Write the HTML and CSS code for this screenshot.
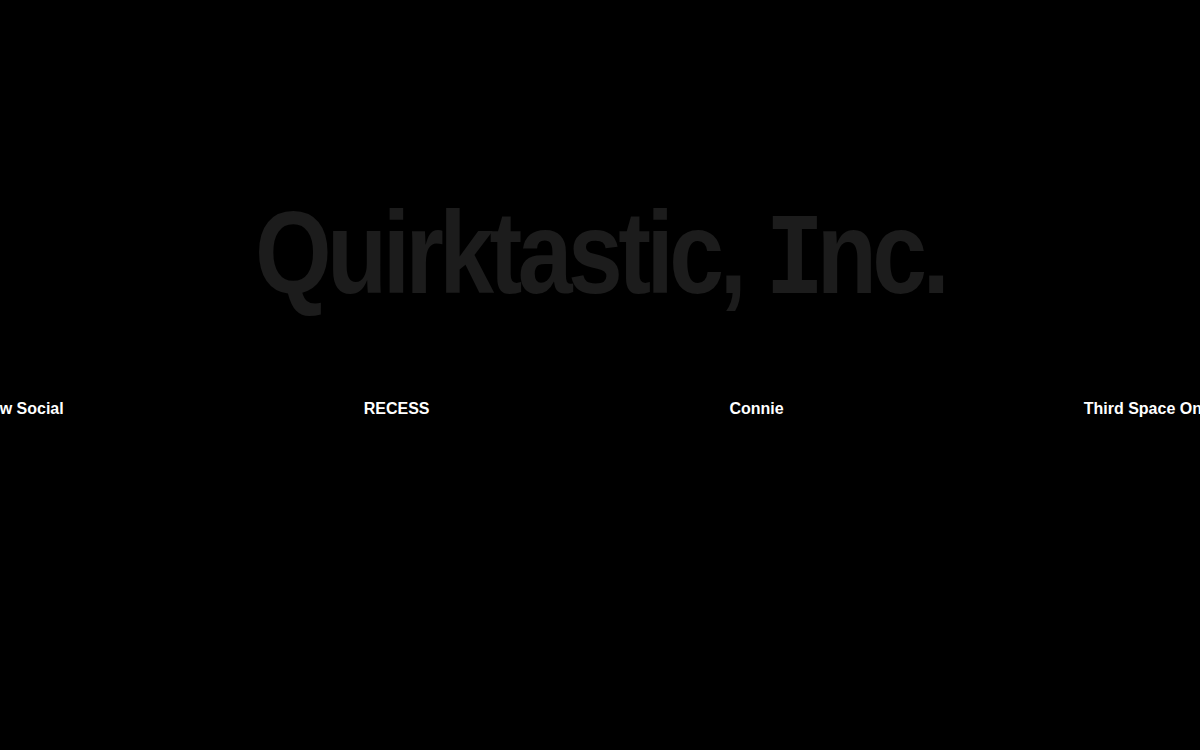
FILE: index.html
```html
<!DOCTYPE html>
<html lang="en">
<head>
<meta charset="utf-8">
<title>Quirktastic, Inc.</title>
<link rel="stylesheet" href="styles.css">
</head>
<body>
<main class="page">
  <section class="hero">
    <h1 class="brand">Quirktastic, <span class="brand-i">I</span>nc.</h1>
  </section>
  <section class="ticker">
    <ul class="ticker-track">
      <li class="ticker-item">Glow Social</li>
      <li class="ticker-item">RECESS</li>
      <li class="ticker-item">Connie</li>
      <li class="ticker-item">Third Space Online</li>
    </ul>
  </section>
</main>
</body>
</html>
```
FILE: styles.css
```css
* { box-sizing: border-box; }
html, body {
  margin: 0;
  padding: 0;
  background: #000;
  width: 100%;
  height: 100%;
  overflow: hidden;
}
.page {
  display: flex;
  flex-direction: column;
  height: 750px;
}
.hero {
  padding-top: 183px;
  display: flex;
  justify-content: center;
}
.brand {
  margin: 0;
  font-family: "Liberation Sans", Arial, sans-serif;
  font-weight: 700;
  font-size: 116px;
  line-height: 140px;
  letter-spacing: -5.4px;
  color: #1c1c1c;
  white-space: nowrap;
  transform: scaleX(0.85);
}
.brand-i {
  font-family: "Liberation Mono", monospace;
  font-weight: 700;
  letter-spacing: -9px;
}
.ticker {
  margin-top: 67px;
  overflow: hidden;
  width: 1200px;
}
.ticker-track {
  list-style: none;
  margin: 0 0 0 -27px;
  padding: 0;
  display: flex;
  gap: 300px;
  white-space: nowrap;
}
.ticker-item {
  font-family: "Liberation Sans", Arial, sans-serif;
  font-weight: 700;
  font-size: 16px;
  line-height: 20px;
  color: #fff;
  flex: none;
}
```
